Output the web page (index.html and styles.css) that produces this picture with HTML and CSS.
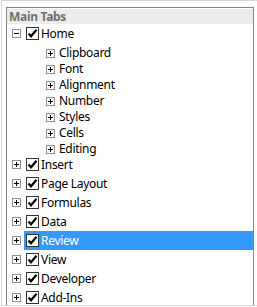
FILE: index.html
```html
<!DOCTYPE html>
<html>
<head>
    <meta charset="UTF-8">
    <title>Main Tabs</title>
    <link rel="stylesheet" href="styles.css">
</head>
<body>
    <div class="pane">
        <div class="tree">
            <div class="tree-header">Main Tabs</div>

            <!-- Home, expanded -->
            <div class="tree-row">
                <span class="expander minus"></span>
                <span class="item">
                    <span class="check"><svg viewBox="0 0 11 11" width="11" height="11"><path d="M1.5 5.5 L4 8.3 L9.5 1.8" fill="none" stroke="#000" stroke-width="2.2"/></svg></span>
                    <span class="label">Home</span>
                </span>
            </div>
            <div class="sub-row"><span class="expander plus"></span><span class="label">Clipboard</span></div>
            <div class="sub-row"><span class="expander plus"></span><span class="label">Font</span></div>
            <div class="sub-row"><span class="expander plus"></span><span class="label">Alignment</span></div>
            <div class="sub-row"><span class="expander plus"></span><span class="label">Number</span></div>
            <div class="sub-row"><span class="expander plus"></span><span class="label">Styles</span></div>
            <div class="sub-row"><span class="expander plus"></span><span class="label">Cells</span></div>
            <div class="sub-row"><span class="expander plus"></span><span class="label">Editing</span></div>

            <div class="tree-row">
                <span class="expander plus"></span>
                <span class="item">
                    <span class="check"><svg viewBox="0 0 11 11" width="11" height="11"><path d="M1.5 5.5 L4 8.3 L9.5 1.8" fill="none" stroke="#000" stroke-width="2.2"/></svg></span>
                    <span class="label">Insert</span>
                </span>
            </div>
            <div class="tree-row">
                <span class="expander plus"></span>
                <span class="item">
                    <span class="check"><svg viewBox="0 0 11 11" width="11" height="11"><path d="M1.5 5.5 L4 8.3 L9.5 1.8" fill="none" stroke="#000" stroke-width="2.2"/></svg></span>
                    <span class="label">Page Layout</span>
                </span>
            </div>
            <div class="tree-row">
                <span class="expander plus"></span>
                <span class="item">
                    <span class="check"><svg viewBox="0 0 11 11" width="11" height="11"><path d="M1.5 5.5 L4 8.3 L9.5 1.8" fill="none" stroke="#000" stroke-width="2.2"/></svg></span>
                    <span class="label">Formulas</span>
                </span>
            </div>
            <div class="tree-row">
                <span class="expander plus"></span>
                <span class="item">
                    <span class="check"><svg viewBox="0 0 11 11" width="11" height="11"><path d="M1.5 5.5 L4 8.3 L9.5 1.8" fill="none" stroke="#000" stroke-width="2.2"/></svg></span>
                    <span class="label">Data</span>
                </span>
            </div>
            <div class="tree-row">
                <span class="expander plus"></span>
                <span class="item selected">
                    <span class="check"><svg viewBox="0 0 11 11" width="11" height="11"><path d="M1.5 5.5 L4 8.3 L9.5 1.8" fill="none" stroke="#000" stroke-width="2.2"/></svg></span>
                    <span class="label">Review</span>
                </span>
            </div>
            <div class="tree-row">
                <span class="expander plus"></span>
                <span class="item">
                    <span class="check"><svg viewBox="0 0 11 11" width="11" height="11"><path d="M1.5 5.5 L4 8.3 L9.5 1.8" fill="none" stroke="#000" stroke-width="2.2"/></svg></span>
                    <span class="label">View</span>
                </span>
            </div>
            <div class="tree-row">
                <span class="expander plus"></span>
                <span class="item">
                    <span class="check"><svg viewBox="0 0 11 11" width="11" height="11"><path d="M1.5 5.5 L4 8.3 L9.5 1.8" fill="none" stroke="#000" stroke-width="2.2"/></svg></span>
                    <span class="label">Developer</span>
                </span>
            </div>
            <div class="tree-row">
                <span class="expander plus"></span>
                <span class="item">
                    <span class="check"><svg viewBox="0 0 11 11" width="11" height="11"><path d="M1.5 5.5 L4 8.3 L9.5 1.8" fill="none" stroke="#000" stroke-width="2.2"/></svg></span>
                    <span class="label">Add-Ins</span>
                </span>
            </div>
        </div>
    </div>
</body>
</html>
```

FILE: styles.css
```css
body {
    margin: 0;
    background: #fff;
    font-family: "Noto Sans", "Open Sans", sans-serif;
    font-size: 12px;
    letter-spacing: -0.3px;
    color: #000;
}
.pane {
    width: 256px;
    height: 306px;
    margin-left: 1px;
    box-sizing: border-box;
    border-top: 1px solid #d6d6d6;
    border-left: 1px solid #d6d6d6;
    border-bottom: 1px solid #d6d6d6;
    padding: 6px 0 0 4px;
}
.tree {
    width: 248px;
    height: 298px;
    box-sizing: border-box;
    border: 1px solid #828790;
    border-bottom: none;
    overflow: hidden;
}
.tree-header {
    height: 15px;
    margin-top: 1px;
    padding-left: 2px;
    background: #ececec;
    color: #6f6f6f;
    font-weight: bold;
    line-height: 15px;
}
.tree-row {
    display: flex;
    align-items: center;
    height: 19px;
    padding-left: 5px;
}
.sub-row {
    display: flex;
    align-items: center;
    height: 16px;
    box-sizing: border-box;
    padding: 4px 0 0 39px;
}
.expander {
    position: relative;
    width: 9px;
    height: 9px;
    box-sizing: border-box;
    border: 1px solid #919191;
    background: #fff;
    flex: none;
}
.expander::before,
.expander.plus::after {
    content: "";
    position: absolute;
    background: #000;
}
.expander::before {
    left: 1px;
    top: 3px;
    width: 5px;
    height: 1px;
}
.expander.plus::after {
    left: 3px;
    top: 1px;
    width: 1px;
    height: 5px;
}
.tree-row .expander {
    margin-right: 3px;
}
.sub-row .expander {
    margin-right: 4px;
}
.item {
    display: flex;
    align-items: center;
    flex: 1;
    height: 19px;
    padding-left: 2px;
}
.item.selected {
    background: #3399ff;
    color: #fff;
}
.check {
    display: flex;
    align-items: center;
    justify-content: center;
    width: 13px;
    height: 13px;
    box-sizing: border-box;
    border: 1px solid #333;
    background: #fff;
    margin-right: 2px;
}
.label {
    white-space: nowrap;
    line-height: 16px;
}
```
